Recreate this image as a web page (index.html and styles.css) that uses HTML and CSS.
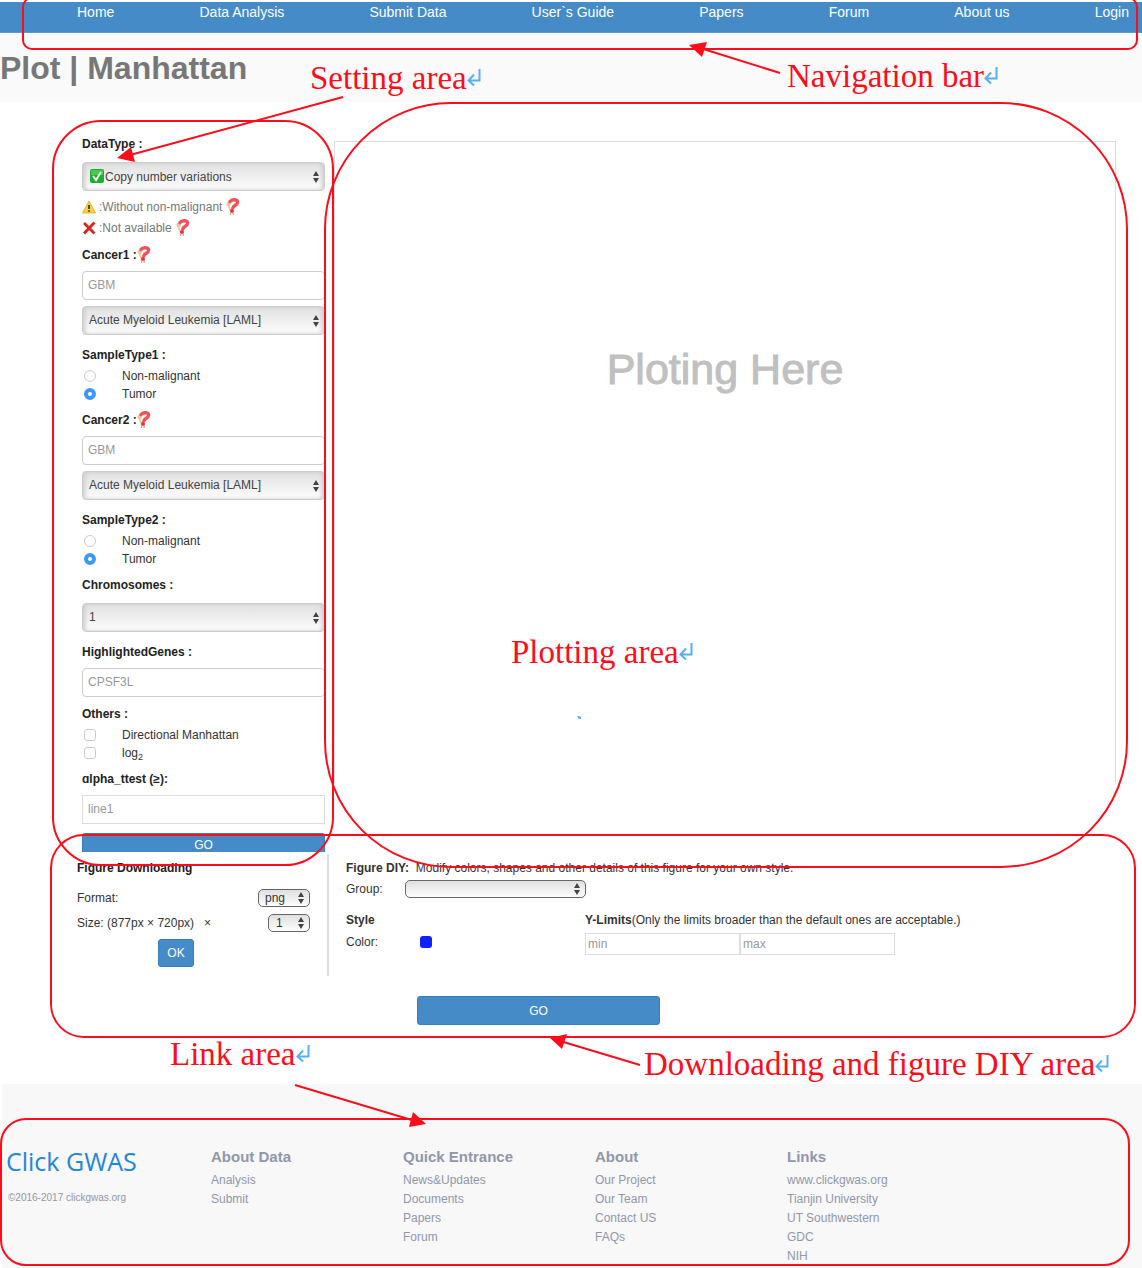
FILE: index.html
```html
<!DOCTYPE html>
<html lang="en">
<head>
<meta charset="utf-8">
<meta name="viewport" content="width=device-width, initial-scale=1">
<title>Plot | Manhattan</title>
<link rel="stylesheet" href="styles.css">
</head>
<body>
<svg class="sprite" aria-hidden="true">
  <symbol id="help" viewBox="0 0 14 18">
    <path d="M2.500 8 4.500 13" fill="none" stroke="#eec79a" stroke-width="1.800"/>
    <circle cx="2.600" cy="6" r="2.200" fill="#efc39a"/>
    <path d="M4 3.600C6 .8 11.800 1.200 11.600 4.500c-.2 2.800-4.200 2.600-4.800 5.500" fill="none" stroke="#f0525c" stroke-width="3.400" stroke-linecap="round"/>
    <circle cx="6" cy="13" r="2" fill="#e8323c"/>
    <path d="M4.500 14.500V17M7.200 14.500V17" stroke="#d9a878" stroke-width="1.300"/>
  </symbol>
  <symbol id="return" viewBox="0 0 14 18">
    <path d="M12.500 1v11.500H1.500M7 6.500l-5.500 6 5.500 5" fill="none" stroke="#58aef8" stroke-width="2"/>
  </symbol>
</svg>

<nav class="nav">
  <a href="#">Home</a>
  <a href="#">Data Analysis</a>
  <a href="#">Submit Data</a>
  <a href="#">User`s Guide</a>
  <a href="#">Papers</a>
  <a href="#">Forum</a>
  <a href="#">About us</a>
  <a href="#">Login</a>
</nav>

<header class="title-band"><h1>Plot | Manhattan</h1></header>

<main>
  <div class="workspace">
    <form class="settings">
      <div class="field roomy">
        <label class="name" for="datatype">DataType :</label>
        <div class="iconed">
          <select id="datatype" class="control picker"><option>Copy number variations</option></select>
          <svg class="check" viewBox="0 0 14 14" aria-hidden="true"><rect width="14" height="14" rx="2" fill="#1fae2c"/><path d="M1 1h12v5H1z" fill="#4cc755"/><path d="m3 7 3 4 5-8" fill="none" stroke="#fff" stroke-width="2"/></svg>
        </div>
      </div>
      <div class="hints">
        <p><svg class="mark" viewBox="0 0 14 14" aria-hidden="true"><path d="M7 1 13.500 13H.5z" fill="#fbd235" stroke="#d9a92a" stroke-width=".8" stroke-linejoin="round"/><path d="M7 5v4M7 10.200v1.600" stroke="#222" stroke-width="1.600"/></svg><span>:Without non-malignant</span><svg class="help" aria-hidden="true"><use href="#help"/></svg></p>
        <p><svg class="mark" viewBox="0 0 14 14" aria-hidden="true"><path d="m2 2 10.500 10.500M12.500 1.500 2 12.500" stroke="#d8261c" stroke-width="2.800"/></svg><span>:Not available</span><svg class="help" aria-hidden="true"><use href="#help"/></svg></p>
      </div>

      <div class="field">
        <label class="name" for="cancer1">Cancer1 :<svg class="help" aria-hidden="true"><use href="#help"/></svg></label>
        <input id="cancer1" class="control" type="text" placeholder="GBM">
        <select class="control picker" aria-label="Cancer1 list"><option>Acute Myeloid Leukemia [LAML]</option></select>
      </div>
      <fieldset class="after-picker">
        <legend class="name">SampleType1 :</legend>
        <label class="choice"><input type="radio" name="sample1">Non-malignant</label>
        <label class="choice"><input type="radio" name="sample1" checked>Tumor</label>
      </fieldset>

      <div class="field">
        <label class="name" for="cancer2">Cancer2 :<svg class="help" aria-hidden="true"><use href="#help"/></svg></label>
        <input id="cancer2" class="control" type="text" placeholder="GBM">
        <select class="control picker" aria-label="Cancer2 list"><option>Acute Myeloid Leukemia [LAML]</option></select>
      </div>
      <fieldset class="after-picker">
        <legend class="name">SampleType2 :</legend>
        <label class="choice"><input type="radio" name="sample2">Non-malignant</label>
        <label class="choice"><input type="radio" name="sample2" checked>Tumor</label>
      </fieldset>

      <div class="field roomy">
        <label class="name" for="chromosomes">Chromosomes :</label>
        <select id="chromosomes" class="control picker"><option>1</option></select>
      </div>
      <div class="field after-picker">
        <label class="name" for="genes">HighlightedGenes :</label>
        <input id="genes" class="control" type="text" placeholder="CPSF3L">
      </div>
      <fieldset>
        <legend class="name">Others :</legend>
        <label class="choice"><input type="checkbox">Directional Manhattan</label>
        <label class="choice"><input type="checkbox"><span>log<sub>2</sub></span></label>
      </fieldset>
      <div class="field">
        <label class="name" for="alpha">ɑlpha_ttest (≥):</label>
        <input id="alpha" class="control square" type="text" placeholder="line1">
      </div>
      <button class="button submit" type="button">GO</button>
    </form>

    <section class="plot"><p>Ploting Here</p></section>
  </div>

  <div class="tools">
    <form class="download">
      <h2 class="name">Figure Downloading</h2>
      <div class="row"><label for="format">Format:</label><select id="format" class="mini format"><option>png</option></select></div>
      <div class="row"><label for="size">Size: (877px × 720px) &nbsp; ×</label><select id="size" class="mini size"><option>1</option></select></div>
      <button class="button ok" type="button">OK</button>
    </form>
    <form class="diy">
      <p><b>Figure DIY:</b>&nbsp; Modify colors, shapes and other details of this figure for your own style.</p>
      <div class="group"><label for="group">Group:</label><select id="group" class="mini"><option></option></select></div>
      <div class="style-grid">
        <b>Style</b>
        <p class="limits-title"><b>Y-Limits</b>(Only the limits broader than the default ones are acceptable.)</p>
        <div class="color"><span>Color:</span><button class="swatch" type="button" aria-label="Color"></button></div>
        <div class="limits"><input type="text" placeholder="min" aria-label="Y minimum"><input type="text" placeholder="max" aria-label="Y maximum"></div>
      </div>
    </form>
  </div>
  <button class="button apply" type="button">GO</button>
</main>

<footer>
  <div class="brand"><a class="logo" href="#">Click GWAS</a><small>©2016-2017 clickgwas.org</small></div>
  <div><h3>About Data</h3><a href="#">Analysis</a><a href="#">Submit</a></div>
  <div><h3>Quick Entrance</h3><a href="#">News&amp;Updates</a><a href="#">Documents</a><a href="#">Papers</a><a href="#">Forum</a></div>
  <div><h3>About</h3><a href="#">Our Project</a><a href="#">Our Team</a><a href="#">Contact US</a><a href="#">FAQs</a></div>
  <div><h3>Links</h3><a href="#">www.clickgwas.org</a><a href="#">Tianjin University</a><a href="#">UT Southwestern</a><a href="#">GDC</a><a href="#">NIH</a></div>
</footer>

<div class="notes">
  <svg class="outlines" viewBox="0 0 1142 1268" aria-hidden="true">
    <g fill="none" stroke="#fc0d1b" stroke-width="2">
      <rect x="23" y="-2" width="1114" height="51" rx="9"/>
      <rect x="53" y="121" width="280" height="744" rx="48"/>
      <rect x="325" y="103" width="802" height="764" rx="126"/>
      <rect x="51" y="835" width="1084" height="202" rx="33"/>
      <rect x="1" y="1119" width="1128" height="146" rx="25"/>
      <path d="M780 73 700 48M343 97 130 155M640 1065 560 1041M295 1085 415 1121"/>
    </g>
    <path fill="#fc0d1b" d="M689 45l18-3-5 15zM117 158l14-11 4 15zM550 1038l17-4-5 15zM426 1124l-13-12-4 15z"/>
    <path fill="#58aef8" d="M577 716h2l2 1v2h-2z"/>
  </svg>
  <p class="note note-setting">Setting area<svg aria-hidden="true"><use href="#return"/></svg></p>
  <p class="note note-nav">Navigation bar<svg aria-hidden="true"><use href="#return"/></svg></p>
  <p class="note note-plot">Plotting area<svg aria-hidden="true"><use href="#return"/></svg></p>
  <p class="note note-link">Link area<svg aria-hidden="true"><use href="#return"/></svg></p>
  <p class="note note-download">Downloading and figure DIY area<svg aria-hidden="true"><use href="#return"/></svg></p>
</div>
</body>
</html>
```
FILE: styles.css
```css
* { box-sizing: border-box; }

body {
  position: relative;
  margin: 0;
  padding-top: 2px;
  background: #fff;
  color: #333;
  font: 12px/20px "Liberation Sans", Arial, sans-serif;
}

h1, h2, h3, p, fieldset, legend { margin: 0; padding: 0; border: 0; }
input, select, button { margin: 0; font: inherit; color: inherit; }
a { color: inherit; text-decoration: none; }
.sprite { display: none; }

/* Navigation and title */
.nav {
  display: flex;
  justify-content: space-between;
  height: 31px;
  padding: 0 13px 0 77px;
  border-bottom: 1px solid #6399c6;
  background: #448bc8;
  color: #fff;
  font-size: 14px;
}

.title-band {
  height: 69px;
  padding-top: 15px;
  background: #fafafa;
}

.title-band h1 {
  color: #777;
  font-size: 32px;
  line-height: 40px;
}

/* Settings beside the plot */
.workspace {
  display: grid;
  grid-template-columns: 243px 1fr;
  gap: 9px;
  padding: 32px 26px 0 82px;
}

.name {
  display: flex;
  align-items: center;
  height: 20px;
  color: #222;
  font-size: 12px;
  font-weight: bold;
}

.field { display: grid; gap: 6px; margin-top: 7px; }
.field.roomy { gap: 8px; }
.field:first-child { margin-top: 0; }
.after-picker, .field.after-picker { margin-top: 10px; }
fieldset { margin-top: 7px; }
fieldset .name { margin-bottom: 2px; }

.control {
  width: 100%;
  height: 29px;
  padding: 0 5px 2px;
  border: 1px solid #ccc;
  border-radius: 4px;
  background: #fff;
}

.control.square { border-color: #ddd; border-radius: 0; }
::placeholder { color: #999; opacity: 1; }

.picker, .mini {
  appearance: none;
  background:
    url("data:image/svg+xml,%3Csvg xmlns='http://www.w3.org/2000/svg' viewBox='0 0 6 12'%3E%3Cpath d='M0 5l3-5 3 5zM0 7l3 5 3-5z' fill='%23444'/%3E%3C/svg%3E") no-repeat right 5px center / 6px 12px,
    linear-gradient(#e0e0e0, #fdfdfd);
}

.picker {
  padding: 0 6px 2px;
  box-shadow: inset 3px 0 4px -1px #ccc, inset -3px 0 4px -1px #ccc;
  color: #444;
}

.iconed { position: relative; }
.iconed .picker { display: block; padding: 0 6px 0 22px; }
.check { position: absolute; top: 7px; left: 8px; width: 14px; height: 14px; }

.hints { margin-top: 5px; color: #777; }
.hints p { display: flex; align-items: center; height: 21px; }
.mark { width: 14px; height: 14px; margin-right: 3px; }
.help { width: 14px; height: 18px; }
.hints .help { margin-left: 4px; }

.choice {
  display: flex;
  align-items: center;
  gap: 26px;
  height: 18px;
  padding-left: 2px;
}

.choice input {
  appearance: none;
  width: 12px;
  height: 12px;
  border: 1px solid #ccc;
  border-radius: 3px;
  background: #fff;
}

.choice input[type="radio"] { border-radius: 50%; }
.choice input[type="radio"]:checked { border: 4px solid #3b99fc; }
sub { font-size: 9px; line-height: 0; }

.button {
  display: block;
  padding: 0;
  border: 1px solid #357ebd;
  border-radius: 3px;
  background: #448bc8;
  color: #fff;
}

.submit {
  width: 100%;
  margin-top: 9px;
  padding-top: 4px;
  border-bottom: 0;
  border-radius: 3px 3px 0 0;
  line-height: 14px;
}

.plot {
  height: 642px;
  margin-top: 7px;
  padding-top: 200px;
  border: 1px solid #ddd;
  border-bottom: 0;
}

.plot p {
  color: #c0c0c0;
  font-size: 43px;
  line-height: 54px;
  text-align: center;
  -webkit-text-stroke: 1px #c0c0c0;
}

/* Download and figure options */
.tools {
  display: grid;
  grid-template-columns: 252px 1fr;
  margin-top: 2px;
  padding-left: 77px;
}

.download {
  height: 122px;
  padding: 4px 17px 0 0;
  border-right: 2px solid #ddd;
}

.download .name { margin-bottom: 7px; }
.row { display: flex; align-items: center; justify-content: space-between; height: 25px; }

.mini {
  height: 18px;
  padding: 0 6px;
  border: 1px solid #666;
  border-radius: 5px;
  line-height: 16px;
}

.format { width: 52px; }
.size { width: 42px; padding: 0 7px; }
.ok { width: 36px; height: 28px; margin: 4px 0 0 81px; }

.diy { padding: 4px 26px 0 17px; }
.group { display: grid; grid-template-columns: 59px 181px; align-items: center; height: 22px; }
.style-grid { display: grid; grid-template-columns: 239px 1fr; margin-top: 10px; row-gap: 1px; }
.color { display: grid; grid-template-columns: 74px 12px; align-items: center; height: 22px; }
.swatch { height: 12px; padding: 0; border: 0; border-radius: 3px; background: #1020ff; }
.limits { display: flex; margin-top: 2px; }

.limits input {
  width: 155px;
  height: 22px;
  padding: 0 2px;
  border: 1px solid #ddd;
  background: #fff;
}

.apply { width: 243px; height: 29px; margin: 20px 0 59px 417px; }

/* Footer */
footer {
  display: grid;
  grid-template-columns: 205px repeat(4, 192px);
  margin-left: 2px;
  padding: 62px 0 2px 4px;
  background: #f8f8f8;
  color: #9097aa;
}

footer a { display: block; line-height: 19px; }
footer h3 { margin-bottom: 3px; font-size: 15px; line-height: 22px; }

.brand .logo {
  color: #2385d8;
  font: 25px/30px "Open Sans", sans-serif;
}

.brand small { display: block; margin: 12px 0 0 2px; font-size: 10px; }

/* Callouts drawn over the page */
.notes { position: absolute; inset: 0; overflow: hidden; pointer-events: none; }
.outlines { position: absolute; top: 0; left: 0; width: 1142px; height: 1268px; }

.note {
  position: absolute;
  color: #fc0d1b;
  font: 33px/36px "Liberation Serif", "Times New Roman", serif;
  white-space: nowrap;
}

.note svg { width: 14px; height: 18px; vertical-align: 3px; }
.note-setting { top: 60px; left: 310px; }
.note-nav { top: 58px; left: 787px; }
.note-plot { top: 634px; left: 511px; }
.note-link { top: 1036px; left: 170px; }
.note-download { top: 1046px; left: 644px; }
```
